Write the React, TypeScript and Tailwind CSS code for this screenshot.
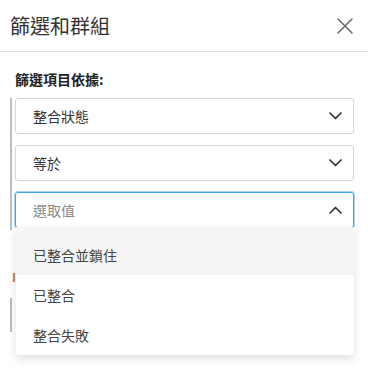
const font = { fontFamily: '"Noto Sans CJK TC", "Noto Sans", sans-serif' };

const options = ["已整合並鎖住", "已整合", "整合失敗"];

const Chevron = ({ up }: { up?: boolean }) => (
  <svg width="13" height="8" viewBox="0 0 13 8" fill="none" className="text-[#333]">
    <path
      d={up ? "M1 7L6.5 1.5L12 7" : "M1 1L6.5 6.5L12 1"}
      stroke="currentColor"
      strokeWidth="1.7"
      strokeLinecap="round"
      strokeLinejoin="round"
    />
  </svg>
);

const SelectBox = ({ label, open }: { label: string; open?: boolean }) => (
  <div
    className={
      open
        ? "flex h-[36px] items-center justify-between rounded-[3px] border border-[#3fa6e6] pl-[17px] pr-[11px] shadow-[0_0_0_1px_#a9d7f5]"
        : "flex h-[36px] items-center justify-between rounded-[3px] border border-[#d6d6d6] pl-[17px] pr-[11px]"
    }
  >
    <span className={open ? "text-[14px] text-[#8a8a8a]" : "text-[14px] text-[#333]"}>{label}</span>
    <Chevron up={open} />
  </div>
);

export default function App() {
  return (
    <div className="h-[368px] w-[368px] overflow-hidden bg-white" style={font}>
      <div className="flex h-[52px] items-center justify-between border-b border-[#e2e2e2] pl-[10px] pr-[15px]">
        <h1 className="text-[20px] font-normal text-[#333]">篩選和群組</h1>
        <svg width="16" height="16" viewBox="0 0 16 16" fill="none" className="text-[#666]">
          <path d="M1 1L15 15M15 1L1 15" stroke="currentColor" strokeWidth="1.5" strokeLinecap="round" />
        </svg>
      </div>

      <div className="px-[15px] pt-[17px]">
        <div className="text-[14px] font-bold leading-[20px] text-[#222]">篩選項目依據:</div>
      </div>

      <div className="relative mt-[9px] pl-[10px] pr-[14px]">
        <div className="flex gap-[3px]">
          <div className="w-[2px] bg-[#bdbdbd]" />
          <div className="flex flex-1 flex-col gap-[11px] pb-[2px]">
            <SelectBox label="整合狀態" />
            <SelectBox label="等於" />
            <SelectBox label="選取值" open />
          </div>
        </div>

        <div className="mt-[40px] ml-[2px] text-[12px] font-bold leading-[14px] text-[#c47a2c]">I</div>
        <div className="mt-[14px] h-[34px] w-[2px] bg-[#bdbdbd]" />

        <div className="absolute left-[16px] right-[14px] top-[129px] overflow-hidden rounded-b-[4px] bg-white shadow-[0_4px_10px_rgba(0,0,0,0.12)]">
          {options.map((o, i) => (
            <div
              key={o}
              className={
                i === 0
                  ? "flex h-[48px] items-center bg-[#f5f5f5] px-[17px] pt-[8px] text-[14px] text-[#444]"
                  : "flex h-[40px] items-center px-[17px] text-[14px] text-[#444]"
              }
            >
              {o}
            </div>
          ))}
        </div>
      </div>
    </div>
  );
}
